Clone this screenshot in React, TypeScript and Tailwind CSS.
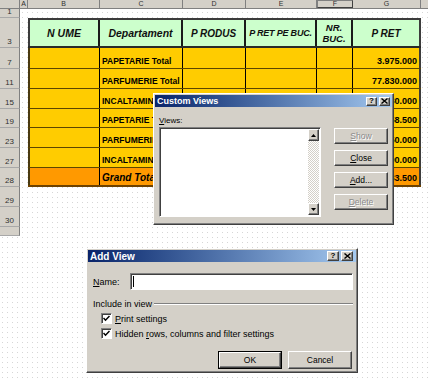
import React from "react";

const FONT = "font-['Liberation_Sans',Arial,Helvetica,sans-serif]";

const raised =
  "bg-[#d4d0c8] border border-t-white border-l-white border-r-[#404040] border-b-[#404040] shadow-[inset_-1px_-1px_0_#808080]";
const sunken =
  "border border-t-[#808080] border-l-[#808080] border-r-white border-b-white shadow-[inset_1px_1px_0_#404040]";

type RowDef = {
  num: string;
  h: string;
  kind: "empty" | "head" | "data" | "total";
  c?: string;
  g?: string;
};

const rows: RowDef[] = [
  { num: "1", h: "h-[9px]", kind: "empty" },
  { num: "3", h: "h-[30px]", kind: "head" },
  { num: "7", h: "h-[21px]", kind: "data", c: "PAPETARIE Total", g: "3.975.000" },
  { num: "11", h: "h-[20px]", kind: "data", c: "PARFUMERIE Total", g: "77.830.000" },
  { num: "15", h: "h-[20px]", kind: "data", c: "INCALTAMINTE Total", g: "12.580.000" },
  { num: "19", h: "h-[19px]", kind: "data", c: "PAPETARIE Total", g: "2.458.500" },
  { num: "23", h: "h-[20px]", kind: "data", c: "PARFUMERIE Total", g: "45.250.000" },
  { num: "27", h: "h-[20px]", kind: "data", c: "INCALTAMINTE Total", g: "8.790.000" },
  { num: "28", h: "h-[19px]", kind: "total", c: "Grand Total", g: "150.883.500" },
  { num: "29", h: "h-[20px]", kind: "empty" },
  { num: "30", h: "h-[20px]", kind: "empty" },
  { num: "", h: "h-[9px]", kind: "empty" },
];

function RowHeader({ num }: { num: string }) {
  return (
    <div className="w-[20px] shrink-0 bg-[#d4d0c8] border-r border-r-[#808080] border-b border-b-[#a8a8a8] flex items-end justify-center pb-[1px] text-[8px] leading-[9px] text-[#303030]">
      {num}
    </div>
  );
}

function HeadCell({ w, children }: { w: string; children: React.ReactNode }) {
  return (
    <div className={`${w} shrink-0 flex items-center justify-center text-center whitespace-nowrap`}>{children}</div>
  );
}

function SheetRow({ r }: { r: RowDef }) {
  if (r.kind === "empty") {
    return (
      <div className={`flex ${r.h}`}>
        <RowHeader num={r.num} />
        <div className="flex-1" />
      </div>
    );
  }
  if (r.kind === "head") {
    const hc = "text-[10.5px] font-bold italic leading-[11px] text-[#101010]";
    return (
      <div className={`flex ${r.h}`}>
        <RowHeader num={r.num} />
        <div className="w-[8px] shrink-0" />
        <div className={`flex bg-[#ccffcc] border-t-2 border-t-[#3c3c3c] border-b-2 border-b-[#2a2a2a] ${hc}`}>
          <HeadCell w="w-[72px] border-l-2 border-l-[#3c3c3c] border-r-2 border-r-[#1a1a1a]">N UME</HeadCell>
          <HeadCell w="w-[83px] border-r-2 border-r-[#1a1a1a]">Departament</HeadCell>
          <HeadCell w="w-[63px] border-r-2 border-r-[#1a1a1a] text-[10px]">P RODUS</HeadCell>
          <HeadCell w="w-[71px] border-r-2 border-r-[#1a1a1a] text-[9px] tracking-[-0.2px]">P RET PE BUC.</HeadCell>
          <HeadCell w="w-[36px] border-r-2 border-r-[#1a1a1a] text-[9.5px]">
            <span>
              NR.
              <br />
              BUC.
            </span>
          </HeadCell>
          <HeadCell w="w-[68px] border-r-2 border-r-[#3c3c3c] text-[10px]">P RET</HeadCell>
        </div>
        <div className="flex-1" />
      </div>
    );
  }
  const total = r.kind === "total";
  const bg = total ? "bg-[#ff9900]" : "bg-[#ffcc00]";
  const bb = total ? "border-b-2 border-b-[#6e4200]" : "border-b border-b-[#5c4600]";
  const txt = total
    ? "text-[10px] font-bold italic text-black"
    : "text-[8.5px] font-bold text-black";
  return (
    <div className={`flex ${r.h}`}>
      <RowHeader num={r.num} />
      <div className="w-[8px] shrink-0" />
      <div className={`flex ${bg} ${bb} leading-[10px]`}>
        <div className="w-[72px] shrink-0 border-l-2 border-l-[#4a3a10] border-r border-r-black" />
        <div className={`w-[83px] shrink-0 border-r border-r-black flex items-end pb-[2px] pl-[2px] whitespace-nowrap ${txt}`}>
          {r.c}
        </div>
        <div className="w-[63px] shrink-0 border-r border-r-black" />
        <div className="w-[71px] shrink-0 border-r border-r-black" />
        <div className="w-[36px] shrink-0 border-r border-r-black" />
        <div className="w-[68px] shrink-0 border-r-2 border-r-[#3c3c3c] flex items-end justify-end pb-[2px] pr-[2px] text-[9px] font-bold text-black whitespace-nowrap">
          {r.g}
        </div>
      </div>
      <div className="flex-1" />
    </div>
  );
}

function ColHdr({ w, children }: { w: string; children?: React.ReactNode }) {
  return (
    <div className={`${w} shrink-0 border-r border-r-[#808080] flex items-center justify-center text-[7px] leading-[8px] text-[#303030]`}>
      {children}
    </div>
  );
}

function Sheet() {
  return (
    <div className="flex flex-col h-[236px] overflow-hidden">
      <div className="flex h-[9px] shrink-0 bg-[#d4d0c8] border-b border-b-[#808080]">
        <ColHdr w="w-[20px]" />
        <ColHdr w="w-[8px]">A</ColHdr>
        <ColHdr w="w-[72px]">B</ColHdr>
        <ColHdr w="w-[83px]">C</ColHdr>
        <ColHdr w="w-[63px]">D</ColHdr>
        <ColHdr w="w-[71px]">E</ColHdr>
        <div className="w-[36px] shrink-0 border border-t-[#808080] border-l-[#808080] border-r-[#404040] border-b-[#404040] flex items-center justify-center text-[7px] leading-[8px] text-[#303030]">
          F
        </div>
        <ColHdr w="w-[68px]">G</ColHdr>
        <div className="flex-1" />
      </div>
      {rows.map((r, i) => (
        <SheetRow key={i} r={r} />
      ))}
      <div className="flex flex-1">
        <div className="w-[20px] bg-[#d4d0c8] border-r border-r-[#808080]" />
      </div>
    </div>
  );
}

function CloseGlyph() {
  return (
    <svg width="7" height="6" viewBox="0 0 7 6">
      <path d="M0.5 0.5 L6.5 5.5 M6.5 0.5 L0.5 5.5" stroke="#000" strokeWidth="1.4" />
    </svg>
  );
}

function TitleButtons({ bw }: { bw: string }) {
  return (
    <div className="flex gap-[2px] items-center">
      <div className={`${bw} ${raised} flex items-center justify-center text-[8px] font-bold leading-[8px] text-black`}>?</div>
      <div className={`${bw} ${raised} flex items-center justify-center`}>
        <CloseGlyph />
      </div>
    </div>
  );
}

function Btn({
  w,
  h,
  children,
  disabled,
  def,
}: {
  w: string;
  h: string;
  children: React.ReactNode;
  disabled?: boolean;
  def?: boolean;
}) {
  const inner = (
    <div
      className={`${raised} w-full h-full flex items-center justify-center text-[8.5px] leading-[9px] ${
        disabled ? "text-[#8a8a8a] [text-shadow:1px_1px_0_#ffffff]" : "text-black"
      }`}
    >
      {children}
    </div>
  );
  if (def) {
    return <div className={`${w} ${h} border border-black`}>{inner}</div>;
  }
  return <div className={`${w} ${h}`}>{inner}</div>;
}

function Arrow({ up }: { up?: boolean }) {
  return (
    <svg width="5" height="3" viewBox="0 0 5 3">
      {up ? <path d="M2.5 0 L5 3 L0 3 Z" fill="#000" /> : <path d="M0 0 L5 0 L2.5 3 Z" fill="#000" />}
    </svg>
  );
}

function CustomViews() {
  return (
    <div className={`absolute left-[153px] top-[93px] w-[241px] h-[132px] ${raised} p-[1px] flex flex-col`}>
      <div className="h-[12px] shrink-0 bg-linear-to-r from-[#0a246a] to-[#a6caf0] flex items-center justify-between pl-[2px] pr-[2px]">
        <span className="text-[9px] font-bold text-white leading-[10px]">Custom Views</span>
        <TitleButtons bw="w-[11px] h-[9px]" />
      </div>
      <div className="flex flex-col pl-[4px] pt-[9px]">
        <div className="h-[10px] text-[8px] leading-[10px] text-black">
          <span className="underline">V</span>iews:
        </div>
        <div className="flex mt-[1px]">
          <div className={`w-[162px] h-[90px] bg-white ${sunken} flex justify-end p-[1px]`}>
            <div className="w-[11px] h-full flex flex-col bg-[repeating-conic-gradient(#d4d0c8_0_25%,#ffffff_0_50%)] bg-[length:2px_2px]">
              <div className={`h-[12px] ${raised} flex items-center justify-center`}>
                <Arrow up />
              </div>
              <div className="flex-1" />
              <div className={`h-[12px] ${raised} flex items-center justify-center`}>
                <Arrow />
              </div>
            </div>
          </div>
          <div className="ml-[13px] mt-[1px] flex flex-col gap-[6px]">
            <Btn w="w-[54px]" h="h-[16px]" disabled>
              <span className="underline">S</span>how
            </Btn>
            <Btn w="w-[54px]" h="h-[16px]">
              <span className="underline">C</span>lose
            </Btn>
            <Btn w="w-[54px]" h="h-[16px]">
              <span className="underline">A</span>dd...
            </Btn>
            <Btn w="w-[54px]" h="h-[16px]" disabled>
              <span className="underline">D</span>elete
            </Btn>
          </div>
        </div>
      </div>
    </div>
  );
}

function Check() {
  return (
    <div className={`w-[11px] h-[11px] bg-white ${sunken} flex items-center justify-center`}>
      <svg width="7" height="7" viewBox="0 0 7 7">
        <path d="M0.5 3 L2.5 5.2 L6.5 1" stroke="#000" strokeWidth="1.5" fill="none" />
      </svg>
    </div>
  );
}

function AddView() {
  return (
    <div className={`absolute left-[86px] top-[248px] w-[272px] h-[125px] ${raised} p-[1px] flex flex-col`}>
      <div className="h-[12px] shrink-0 bg-linear-to-r from-[#0a246a] to-[#a6caf0] flex items-center justify-between pl-[2px] pr-[3px]">
        <span className="text-[10px] font-bold text-white leading-[11px]">Add View</span>
        <TitleButtons bw="w-[12px] h-[10px]" />
      </div>
      <div className="flex flex-col pl-[5px] pr-[3px] text-[9px] leading-[10px] text-black">
        <div className="flex items-center mt-[11px] h-[17px]">
          <div className="w-[37px]">
            <span className="underline">N</span>ame:
          </div>
          <div className={`flex-1 h-[17px] bg-white ${sunken} flex items-center pl-[2px]`}>
            <div className="w-[1px] h-[11px] bg-black" />
          </div>
        </div>
        <div className="flex items-center mt-[9px] h-[9px] gap-[2px]">
          <span>Include in view</span>
          <div className="flex-1 h-[2px] border-t border-t-[#808080] border-b border-b-white" />
        </div>
        <div className="flex flex-col pl-[8px] mt-[5px] gap-[4px]">
          <div className="flex items-center gap-[3px] h-[11px]">
            <Check />
            <span>
              <span className="underline">P</span>rint settings
            </span>
          </div>
          <div className="flex items-center gap-[3px] h-[11px]">
            <Check />
            <span>
              Hidden <span className="underline">r</span>ows, columns and filter settings
            </span>
          </div>
        </div>
        <div className="flex justify-end gap-[6px] mt-[12px] pr-[1px]">
          <Btn w="w-[64px]" h="h-[18px]" def>
            OK
          </Btn>
          <Btn w="w-[64px]" h="h-[18px]">
            Cancel
          </Btn>
        </div>
      </div>
    </div>
  );
}

export default function App() {
  return (
    <div
      className={`relative w-[428px] h-[379px] bg-white bg-[radial-gradient(circle,#d6d6d6_0.7px,transparent_0.9px)] bg-[length:5px_5px] overflow-hidden ${FONT}`}
    >
      <Sheet />
      <CustomViews />
      <AddView />
    </div>
  );
}
